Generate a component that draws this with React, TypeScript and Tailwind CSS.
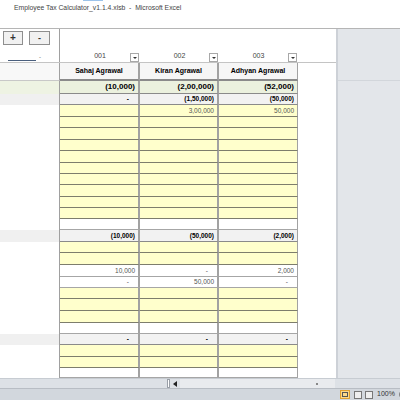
import React from "react";

type Kind = "total" | "sub" | "yellow" | "white";

type RowDef = {
  h: number;
  kind: Kind;
  v: string[];
};

const rows: RowDef[] = [
  { h: 13, kind: "total", v: ["(10,000)", "(2,00,000)", "(52,000)"] },
  { h: 11, kind: "sub", v: ["-", "(1,50,000)", "(50,000)"] },
  { h: 12, kind: "yellow", v: ["", "3,00,000", "50,000"] },
  { h: 11, kind: "yellow", v: ["", "", ""] },
  { h: 12, kind: "yellow", v: ["", "", ""] },
  { h: 11, kind: "yellow", v: ["", "", ""] },
  { h: 12, kind: "yellow", v: ["", "", ""] },
  { h: 11, kind: "yellow", v: ["", "", ""] },
  { h: 11, kind: "yellow", v: ["", "", ""] },
  { h: 12, kind: "yellow", v: ["", "", ""] },
  { h: 11, kind: "yellow", v: ["", "", ""] },
  { h: 11, kind: "yellow", v: ["", "", ""] },
  { h: 11, kind: "white", v: ["", "", ""] },
  { h: 12, kind: "sub", v: ["(10,000)", "(50,000)", "(2,000)"] },
  { h: 11, kind: "yellow", v: ["", "", ""] },
  { h: 12, kind: "yellow", v: ["", "", ""] },
  { h: 12, kind: "white", v: ["10,000", "-", "2,000"] },
  { h: 11, kind: "white", v: ["-", "50,000", "-"] },
  { h: 11, kind: "yellow", v: ["", "", ""] },
  { h: 12, kind: "yellow", v: ["", "", ""] },
  { h: 12, kind: "yellow", v: ["", "", ""] },
  { h: 11, kind: "white", v: ["", "", ""] },
  { h: 11, kind: "sub", v: ["-", "-", "-"] },
  { h: 12, kind: "yellow", v: ["", "", ""] },
  { h: 11, kind: "yellow", v: ["", "", ""] },
  { h: 10, kind: "white", v: ["", "", ""] },
];

const cellBg: Record<Kind, string> = {
  total: "bg-[#ebf1de] text-[8px] font-bold text-black border-b border-[#8a8a8a]",
  sub: "bg-[#f2f2f2] text-[6.5px] font-bold text-black border-b border-[#8a8a8a]",
  yellow: "bg-[#ffffcc] text-[6.5px] text-[#555] border-b border-[#7d7d6c]",
  white: "bg-white text-[6.5px] text-[#555] border-b border-[#a6a6a6]",
};

const leftBg: Record<Kind, string> = {
  total: "bg-[#eef3e3]",
  sub: "bg-[#f0f0f0]",
  yellow: "bg-white",
  white: "bg-white",
};

const widths = ["w-[80px] border-r-2", "w-[79px] border-r-2", "w-[79px] border-r"];

function DropBtn() {
  return (
    <div className="w-[9px] h-[9px] bg-white border border-[#a8a8a8] flex items-center justify-center">
      <div className="w-0 h-0 border-l-[2px] border-r-[2px] border-t-[2px] border-l-transparent border-r-transparent border-t-[#333]" />
    </div>
  );
}

function SheetRow({ r }: { r: RowDef }) {
  return (
    <div className="flex" style={{ height: r.h }}>
      <div className={`w-[60px] border-r border-[#a0a0a0] ${leftBg[r.kind]}`} />
      {r.v.map((val, i) => (
        <div
          key={i}
          className={`${widths[i]} border-r-[#a2a2a2] ${cellBg[r.kind]} flex items-center justify-end ${
            val === "-" ? "pr-[9px]" : "pr-[3px]"
          }`}
        >
          {val}
        </div>
      ))}
      <div className="flex-1 bg-white" />
    </div>
  );
}

export default function App() {
  return (
    <div
      className="w-[400px] h-[400px] overflow-hidden bg-white flex flex-col"
      style={{ fontFamily: '"Liberation Sans", Arial, sans-serif' }}
    >
      {/* TITLE */}
      <div className="h-[29px] border-b border-[#b5b5b5] relative">
        <div className="absolute left-[83px] top-0 w-[20px] h-[1px] bg-[#9cc3ea]" />
        <div className="pl-[14px] pt-[3px] text-[6.8px] text-[#444]">
          Employee Tax Calculator_v1.1.4.xlsb&nbsp; -&nbsp; Microsoft Excel
        </div>
      </div>

      {/* BODY */}
      <div className="flex h-[349px]">
        <div className="w-[336px] flex flex-col">
          {/* header strip */}
          <div className="flex h-[33px]">
            <div className="w-[60px] border-r border-[#a0a0a0] relative">
              <div className="flex gap-[6px] pl-[3px] pt-[2px]">
                <div className="w-[20px] h-[14px] border border-[#8e8e8e] bg-[#f1f1f1] flex items-center justify-center text-[10px] font-bold text-[#333] leading-none">
                  +
                </div>
                <div className="w-[21px] h-[14px] border border-[#8e8e8e] bg-[#f1f1f1] flex items-center justify-center text-[9px] font-bold text-[#333] leading-none">
                  -
                </div>
              </div>
              <div className="absolute left-[8px] top-[31px] w-[28px] h-[1px] bg-[#4a5f7e]" />
              <div className="absolute left-[39px] top-[24px] text-[6px] text-[#555]">-</div>
            </div>
            {["001", "002", "003"].map((c, i) => (
              <div
                key={c}
                className={`${i === 0 ? "w-[80px]" : "w-[79px]"} relative flex items-end justify-center pb-[1px]`}
              >
                <span className="text-[7px] text-[#444]">{c}</span>
                <div className="absolute right-[1px] bottom-0">
                  <DropBtn />
                </div>
              </div>
            ))}
          </div>

          {/* names row */}
          <div className="flex h-[19px] border-t border-[#c4c4c4]">
            <div className="w-[60px] border-r border-[#a0a0a0] bg-[#f8f8f8] border-b border-b-[#c8c8c8]" />
            {["Sahaj Agrawal", "Kiran Agrawal", "Adhyan Agrawal"].map((n, i) => (
              <div
                key={n}
                className={`${widths[i]} border-r-[#a2a2a2] bg-[#f6f6f6] border-b-2 border-b-[#8a8a8a] flex items-center justify-center text-[7px] font-bold text-black`}
              >
                {n}
              </div>
            ))}
            <div className="flex-1 bg-white" />
          </div>

          {rows.map((r, i) => (
            <SheetRow key={i} r={r} />
          ))}
        </div>

        {/* right grey panel */}
        <div className="flex-1 bg-[#e3e6ea] border-l-2 border-[#cdd1d7] flex flex-col">
          <div className="h-[52px] border-b border-[#d2d6db]" />
        </div>
      </div>

      {/* horizontal scroll */}
      <div className="h-[10px] bg-[#dde1e6] border-t border-[#c7ccd2] flex items-center">
        <div className="w-[167px]" />
        <div className="w-[3px] h-[9px] bg-white border border-[#9aa0a8]" />
        <div className="w-[3px]" />
        <div className="w-0 h-0 border-t-[3px] border-b-[3px] border-r-[4px] border-t-transparent border-b-transparent border-r-[#222]" />
        <div className="w-[3px]" />
        <div className="w-[155px] h-[9px] bg-[#e9ebee] flex items-center justify-end pr-[17px]">
          <div className="w-[2px] h-[2px] bg-[#888]" />
        </div>
        <div className="flex-1" />
      </div>

      {/* status bar */}
      <div className="flex-1 bg-[#d2d7dd] border-t border-[#b8bdc4] flex items-center">
        <div className="w-[340px] shrink-0" />
        <div className="shrink-0 w-[10px] h-[9px] border border-[#e0a030] bg-[#fcd98a] flex items-center justify-center">
          <div className="w-[6px] h-[5px] border border-[#555]" />
        </div>
        <div className="w-[4px] shrink-0" />
        <div className="shrink-0 w-[8px] h-[8px] border border-[#777] bg-[#eee]" />
        <div className="w-[3px] shrink-0" />
        <div className="shrink-0 w-[8px] h-[8px] border border-[#777] bg-[#eee]" />
        <span className="shrink-0 text-[7px] text-[#333] ml-[4px]">100%</span>
        <div className="ml-[4px] shrink-0 w-[9px] h-[9px] rounded-full border border-[#666] bg-white" />
      </div>
    </div>
  );
}
